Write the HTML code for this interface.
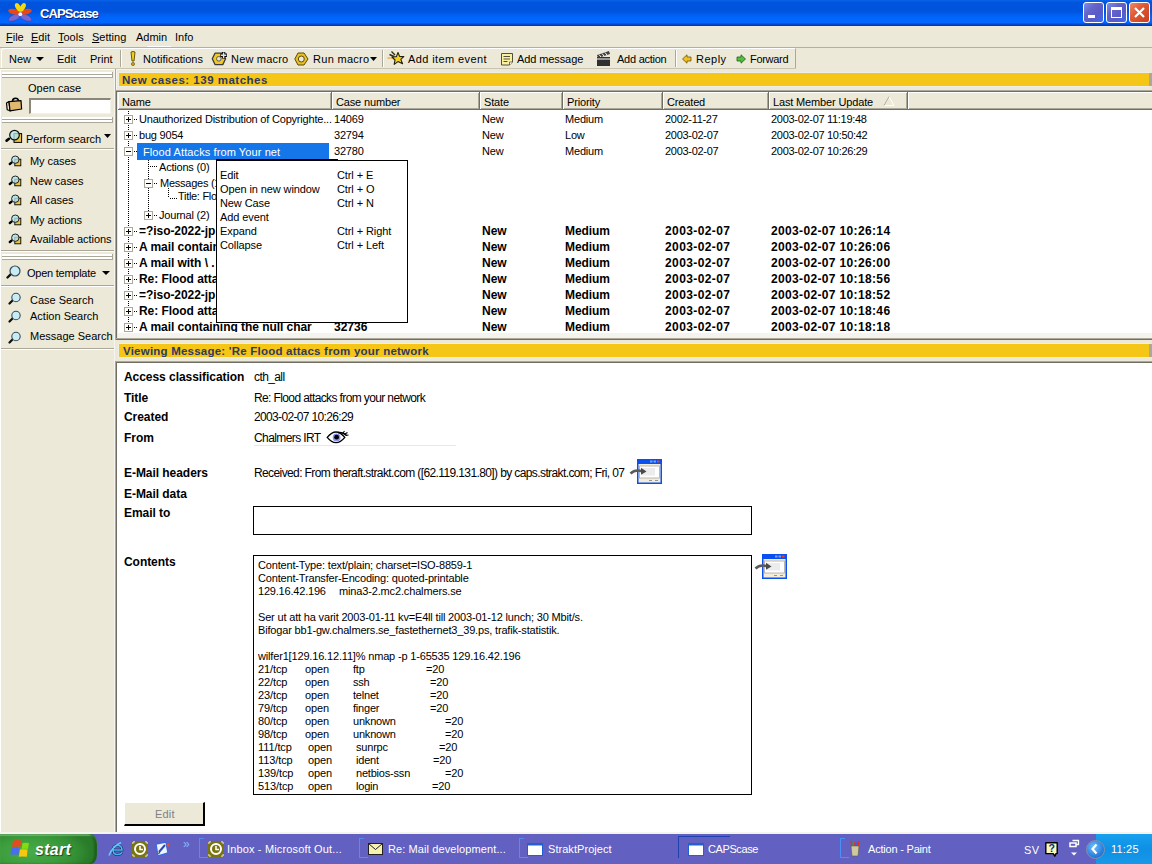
<!DOCTYPE html>
<html><head><meta charset="utf-8"><title>CAPScase</title>
<style>
html,body{margin:0;padding:0;}
body{width:1152px;height:864px;overflow:hidden;position:relative;background:#ece9d8;font-family:"Liberation Sans",sans-serif;font-size:11px;color:#000;}
.t{position:absolute;white-space:pre;}
.r{position:absolute;box-sizing:content-box;}
u{text-decoration:underline;text-underline-offset:1px;}
</style></head><body>
<div class="r" style="left:0px;top:0px;width:1152px;height:26px;background:linear-gradient(to bottom,#0a64ea 0px,#0054de 2.5px,#0053dc 11px,#0060f2 15px,#0066fe 18px,#0066ff 22.5px,#0046cc 24.5px,#0034b0 26px);"></div>
<svg class="r" style="left:0px;top:0px;" width="40" height="26" viewBox="0 0 40 26">
<ellipse cx="14.3" cy="17.6" rx="6.3" ry="2.9" fill="#7468d4" stroke="#4a3a90" stroke-width="0.5" transform="rotate(-24 14.3 17.6)"/>
<ellipse cx="25.9" cy="17.6" rx="6.3" ry="2.9" fill="#7468d4" stroke="#4a3a90" stroke-width="0.5" transform="rotate(24 25.9 17.6)"/>
<ellipse cx="13.7" cy="11.7" rx="5.6" ry="2.7" fill="#e84818" transform="rotate(14 13.7 11.7)"/>
<ellipse cx="26.3" cy="11.7" rx="5.6" ry="2.7" fill="#e84818" transform="rotate(-14 26.3 11.7)"/>
<ellipse cx="18.2" cy="7.4" rx="2.5" ry="4.8" fill="#f4d810" transform="rotate(-29 18.2 7.4)"/>
<ellipse cx="22.6" cy="7.4" rx="2.5" ry="4.8" fill="#f4d810" transform="rotate(29 22.6 7.4)"/>
<circle cx="20.3" cy="14.2" r="1.9" fill="#f4f4ff"/></svg>
<div class="t" style="left:40px;top:7px;font-size:13px;line-height:13px;font-weight:bold;color:#fff;letter-spacing:-0.9px;text-shadow:1px 1px 0 #0a1e80;">CAPScase</div>
<div class="r" style="left:1083px;top:2px;width:19px;height:19px;border:1px solid #fff;border-radius:3px;background:linear-gradient(135deg,#7d8ef0 0%,#6464c8 35%,#5a5ac8 65%,#3a6af0 100%);"></div>
<div class="r" style="left:1106px;top:2px;width:19px;height:19px;border:1px solid #fff;border-radius:3px;background:linear-gradient(135deg,#7d8ef0 0%,#6464c8 35%,#5a5ac8 65%,#3a6af0 100%);"></div>
<div class="r" style="left:1129px;top:2px;width:19px;height:19px;border:1px solid #fff;border-radius:3px;background:linear-gradient(135deg,#f08a68 0%,#e05a34 40%,#c8401c 100%);"></div>
<div class="r" style="left:1088px;top:15px;width:7px;height:3px;background:#fff;"></div>
<div class="r" style="left:1111px;top:7px;width:9px;height:7px;border:1px solid #fff;border-top-width:3px;"></div>
<svg class="r" style="left:1129px;top:2px;" width="21" height="21" viewBox="0 0 21 21"><path d="M6 6 L15 15 M15 6 L6 15" stroke="#fff" stroke-width="2.2"/></svg>
<div class="r" style="left:0px;top:26px;width:1152px;height:21px;background:#ece9d8;"></div>
<div class="t" style="left:6px;top:32px;font-size:11px;line-height:11px;"><u>F</u>ile</div>
<div class="t" style="left:31px;top:32px;font-size:11px;line-height:11px;"><u>E</u>dit</div>
<div class="t" style="left:58px;top:32px;font-size:11px;line-height:11px;"><u>T</u>ools</div>
<div class="t" style="left:92px;top:32px;font-size:11px;line-height:11px;"><u>S</u>etting</div>
<div class="t" style="left:136px;top:32px;font-size:11px;line-height:11px;">Admin</div>
<div class="t" style="left:175px;top:32px;font-size:11px;line-height:11px;">Info</div>
<div class="r" style="left:147px;top:46px;width:24px;height:1px;background:#fff;"></div>
<div class="r" style="left:0px;top:47px;width:1152px;height:1px;background:#b4b09e;"></div>
<div class="r" style="left:0px;top:48px;width:1152px;height:21px;background:#ece9d8;"></div>
<div class="r" style="left:1px;top:48px;width:793px;height:19px;border-top:1px solid #fff;border-left:1px solid #fff;border-bottom:1px solid #aca899;border-right:1px solid #aca899;border-radius:3px 0 0 0;"></div>
<div class="r" style="left:0px;top:68px;width:796px;height:1px;background:#c8c4b0;"></div>
<div class="t" style="left:9px;top:54px;font-size:11px;line-height:11px;">New</div>
<div class="t" style="left:57px;top:54px;font-size:11px;line-height:11px;">Edit</div>
<div class="t" style="left:90px;top:54px;font-size:11px;line-height:11px;">Print</div>
<svg class="r" style="left:36px;top:57px;" width="9" height="5" viewBox="0 0 9 5"><path d="M0 0 H8 L4 4 Z" fill="#000"/></svg>
<div class="r" style="left:120px;top:50px;width:1px;height:17px;background:#aca899;"></div>
<div class="r" style="left:121px;top:50px;width:1px;height:17px;background:#fff;"></div>
<div class="r" style="left:382px;top:50px;width:1px;height:17px;background:#aca899;"></div>
<div class="r" style="left:383px;top:50px;width:1px;height:17px;background:#fff;"></div>
<div class="r" style="left:675px;top:50px;width:1px;height:17px;background:#aca899;"></div>
<div class="r" style="left:676px;top:50px;width:1px;height:17px;background:#fff;"></div>
<svg class="r" style="left:129px;top:51px;" width="8" height="16" viewBox="0 0 8 16"><path d="M2 1 Q4 0 6 1 L5 10 H3 Z" fill="#f0d020" stroke="#5a4a00" stroke-width="0.9"/><circle cx="4" cy="13" r="1.6" fill="#d4a010" stroke="#5a4a00" stroke-width="0.6"/></svg>
<div class="t" style="left:143px;top:54px;font-size:11px;line-height:11px;">Notifications</div>
<svg class="r" style="left:211px;top:50px;" width="18" height="17" viewBox="0 0 18 17"><path d="M1.3 8.8 L4 3.2 L11 3.2 L14.6 8.8 L11.8 14.6 L4 14.6 Z" fill="#f0c828" stroke="#3a3a3a" stroke-width="1.3" stroke-linejoin="round"/><circle cx="7.8" cy="8.8" r="2.3" fill="#e4e4dc" stroke="#505048" stroke-width="0.9"/><path d="M12.6 2 V8.6 M9.3 5.3 H15.9" stroke="#000" stroke-width="3.4"/><path d="M12.6 2.6 V8 M9.9 5.3 H15.3" stroke="#dde4f8" stroke-width="1.5"/></svg>
<div class="t" style="left:231px;top:54px;font-size:11px;line-height:11px;letter-spacing:0.2px;">New macro</div>
<svg class="r" style="left:294px;top:51px;" width="16" height="15" viewBox="0 0 16 15"><path d="M4 2 L10 2 L14 8 L10 14 L4 14 L0.8 8 Z" fill="#e8c020" stroke="#5a4a10" stroke-width="1"/><circle cx="7.3" cy="8" r="3" fill="#ece9d8" stroke="#5a4a10" stroke-width="1"/></svg>
<div class="t" style="left:313px;top:54px;font-size:11px;line-height:11px;letter-spacing:0.3px;">Run macro</div>
<svg class="r" style="left:370px;top:57px;" width="8" height="5" viewBox="0 0 8 5"><path d="M0 0 H7 L3.5 4 Z" fill="#000"/></svg>
<svg class="r" style="left:387px;top:50px;" width="19" height="16" viewBox="0 0 19 16"><path d="M0.5 8.2 L6 8" stroke="#e8a040" stroke-width="1.2"/><path d="M2.5 4.5 L7 6.5 M4.5 1.5 L8 5" stroke="#303010" stroke-width="1.4"/><path d="M11 2.5 L12.6 6.4 L16.8 6.6 L13.8 9.4 L15.6 13.8 L11 11.6 L7.2 14.4 L8 10 L5 7 L9.4 6.6 Z" fill="#f4d020" stroke="#202010" stroke-width="1.1" stroke-linejoin="round"/></svg>
<div class="t" style="left:408px;top:54px;font-size:11px;line-height:11px;letter-spacing:0.4px;">Add item event</div>
<svg class="r" style="left:500px;top:52px;" width="14" height="14" viewBox="0 0 14 14"><path d="M1.5 1.5 H12.5 V10 L9.5 13 H1.5 Z" fill="#faf0a0" stroke="#50503a" stroke-width="1"/><path d="M9.5 13 V10 H12.5" fill="#fff" stroke="#50503a" stroke-width="0.8"/><path d="M3.5 4.5 H10 M3.5 7 H10 M3.5 9.5 H7.5" stroke="#50503a" stroke-width="1"/></svg>
<div class="t" style="left:517px;top:54px;font-size:11px;line-height:11px;letter-spacing:-0.1px;">Add message</div>
<svg class="r" style="left:596px;top:50px;" width="15" height="17" viewBox="0 0 15 17"><path d="M1 7 H14 V16 H1 Z" fill="#303030"/><path d="M1 5 L13 1 L14 4 L2 8 Z" fill="#404040"/><path d="M3 4.5 L5 7 M6 3.5 L8 6 M9 2.5 L11 5" stroke="#fff" stroke-width="1"/><path d="M1 9 H14" stroke="#fff" stroke-width="1"/></svg>
<div class="t" style="left:617px;top:54px;font-size:11px;line-height:11px;letter-spacing:-0.25px;">Add action</div>
<svg class="r" style="left:682px;top:54px;" width="10" height="10" viewBox="0 0 10 10"><path d="M0.5 5 L5 0.8 V3 H9 V7 H5 V9.2 Z" fill="#f0c020" stroke="#6a5010" stroke-width="0.8"/></svg>
<div class="t" style="left:696px;top:54px;font-size:11px;line-height:11px;letter-spacing:0.5px;">Reply</div>
<svg class="r" style="left:736px;top:54px;" width="10" height="10" viewBox="0 0 10 10"><path d="M9.5 5 L5 0.8 V3 H1 V7 H5 V9.2 Z" fill="#50c040" stroke="#206010" stroke-width="0.8"/></svg>
<div class="t" style="left:750px;top:54px;font-size:11px;line-height:11px;letter-spacing:-0.3px;">Forward</div>
<div class="r" style="left:0px;top:69px;width:114px;height:763px;background:#ece9d8;border-left:1px solid #fff;border-top:1px solid #fff;"></div>
<div class="r" style="left:114px;top:69px;width:1px;height:763px;background:#f6f5ee;"></div>
<div class="r" style="left:2px;top:72px;width:110px;height:2px;background:#fff;"></div>
<div class="r" style="left:2px;top:74px;width:111px;height:1px;background:#aca899;"></div>
<div class="r" style="left:2px;top:75px;width:110px;height:2px;background:#fff;"></div>
<div class="r" style="left:2px;top:77px;width:111px;height:1px;background:#aca899;"></div>
<div class="r" style="left:112px;top:72px;width:1px;height:6px;background:#aca899;"></div>
<div class="t" style="left:28px;top:83px;font-size:11px;line-height:11px;">Open case</div>
<svg class="r" style="left:5px;top:97px;" width="18" height="16" viewBox="0 0 18 16"><path d="M7.5 4.5 Q7.5 1.2 10.5 1.2 Q13.5 1.2 13.5 4.2" fill="none" stroke="#000" stroke-width="1.6"/><path d="M1.5 6 L4 4.6 L5 13.8 L2.2 12.8 Z" fill="#f4ead0" stroke="#000" stroke-width="1.2" stroke-linejoin="round"/><path d="M4 4.6 L16 3.6 L16.6 12 L5 13.8 Z" fill="#e0b870" stroke="#000" stroke-width="1.2" stroke-linejoin="round"/></svg>
<div class="r" style="left:29px;top:98px;width:79px;height:13px;background:#fff;border-top:2px solid #8a8778;border-left:2px solid #8a8778;border-bottom:1px solid #f4f2e8;border-right:1px solid #f4f2e8;"></div>
<div class="r" style="left:2px;top:117px;width:110px;height:2px;background:#fff;"></div>
<div class="r" style="left:2px;top:119px;width:111px;height:1px;background:#aca899;"></div>
<div class="r" style="left:2px;top:120px;width:110px;height:2px;background:#fff;"></div>
<div class="r" style="left:2px;top:122px;width:111px;height:1px;background:#aca899;"></div>
<div class="r" style="left:112px;top:117px;width:1px;height:6px;background:#aca899;"></div>
<svg class="r" style="left:2px;top:124px;" width="22" height="22" viewBox="0 0 22 22"><path d="M4.6 16.6 L7 14.8" stroke="#000" stroke-width="2.6" stroke-linecap="round"/><rect x="12" y="9.6" width="7.6" height="8.8" fill="#e8c440" stroke="#000" stroke-width="1"/><circle cx="12.5" cy="11.1" r="4.8" fill="#b0e8f4" fill-opacity="0.75" stroke="#111" stroke-width="1.2"/></svg>
<div class="t" style="left:26px;top:134px;font-size:11px;line-height:11px;">Perform search</div>
<svg class="r" style="left:104px;top:134px;" width="8" height="5" viewBox="0 0 8 5"><path d="M0 0 H7 L3.5 4 Z" fill="#000"/></svg>
<div class="r" style="left:1px;top:148px;width:113px;height:1px;background:#aca899;"></div>
<div class="r" style="left:1px;top:149px;width:113px;height:1px;background:#fff;"></div>
<svg class="r" style="left:8px;top:154px;" width="15" height="14" viewBox="0 0 15 14"><path d="M1.8 10 L3.6 8.6" stroke="#000" stroke-width="2.4" stroke-linecap="round"/><rect x="6.8" y="5.2" width="6" height="6.6" fill="#e8c440" stroke="#000" stroke-width="0.9"/><circle cx="7.3" cy="5.7" r="3.7" fill="#b0e8f4" fill-opacity="0.75" stroke="#222" stroke-width="1"/></svg>
<div class="t" style="left:30px;top:156px;font-size:11px;line-height:11px;letter-spacing:-0.05px;">My cases</div>
<svg class="r" style="left:8px;top:174px;" width="15" height="14" viewBox="0 0 15 14"><path d="M1.8 10 L3.6 8.6" stroke="#000" stroke-width="2.4" stroke-linecap="round"/><rect x="6.8" y="5.2" width="6" height="6.6" fill="#e8c440" stroke="#000" stroke-width="0.9"/><circle cx="7.3" cy="5.7" r="3.7" fill="#b0e8f4" fill-opacity="0.75" stroke="#222" stroke-width="1"/></svg>
<div class="t" style="left:30px;top:176px;font-size:11px;line-height:11px;letter-spacing:-0.05px;">New cases</div>
<svg class="r" style="left:8px;top:193px;" width="15" height="14" viewBox="0 0 15 14"><path d="M1.8 10 L3.6 8.6" stroke="#000" stroke-width="2.4" stroke-linecap="round"/><rect x="6.8" y="5.2" width="6" height="6.6" fill="#e8c440" stroke="#000" stroke-width="0.9"/><circle cx="7.3" cy="5.7" r="3.7" fill="#b0e8f4" fill-opacity="0.75" stroke="#222" stroke-width="1"/></svg>
<div class="t" style="left:30px;top:195px;font-size:11px;line-height:11px;letter-spacing:-0.05px;">All cases</div>
<svg class="r" style="left:8px;top:213px;" width="15" height="14" viewBox="0 0 15 14"><path d="M1.8 10 L3.6 8.6" stroke="#000" stroke-width="2.4" stroke-linecap="round"/><rect x="6.8" y="5.2" width="6" height="6.6" fill="#e8c440" stroke="#000" stroke-width="0.9"/><circle cx="7.3" cy="5.7" r="3.7" fill="#b0e8f4" fill-opacity="0.75" stroke="#222" stroke-width="1"/></svg>
<div class="t" style="left:30px;top:215px;font-size:11px;line-height:11px;letter-spacing:-0.05px;">My actions</div>
<svg class="r" style="left:8px;top:232px;" width="15" height="14" viewBox="0 0 15 14"><path d="M1.8 10 L3.6 8.6" stroke="#000" stroke-width="2.4" stroke-linecap="round"/><rect x="6.8" y="5.2" width="6" height="6.6" fill="#e8c440" stroke="#000" stroke-width="0.9"/><circle cx="7.3" cy="5.7" r="3.7" fill="#b0e8f4" fill-opacity="0.75" stroke="#222" stroke-width="1"/></svg>
<div class="t" style="left:30px;top:234px;font-size:11px;line-height:11px;letter-spacing:-0.05px;">Available actions</div>
<div class="r" style="left:1px;top:250px;width:113px;height:1px;background:#aca899;"></div>
<div class="r" style="left:1px;top:251px;width:113px;height:1px;background:#fff;"></div>
<div class="r" style="left:2px;top:254px;width:110px;height:2px;background:#fff;"></div>
<div class="r" style="left:2px;top:256px;width:111px;height:1px;background:#aca899;"></div>
<div class="r" style="left:2px;top:257px;width:110px;height:2px;background:#fff;"></div>
<div class="r" style="left:2px;top:259px;width:111px;height:1px;background:#aca899;"></div>
<div class="r" style="left:112px;top:254px;width:1px;height:6px;background:#aca899;"></div>
<svg class="r" style="left:6px;top:265px;" width="16" height="14" viewBox="0 0 16 14"><path d="M1.5 12.5 L5 9" stroke="#101010" stroke-width="2.4" stroke-linecap="round"/><circle cx="9" cy="6" r="5" fill="#c8ecf4" stroke="#3a4a5a" stroke-width="1.2"/></svg>
<div class="t" style="left:27px;top:268px;font-size:11px;line-height:11px;letter-spacing:-0.25px;">Open template</div>
<svg class="r" style="left:102px;top:271px;" width="9" height="5" viewBox="0 0 9 5"><path d="M0 0 H8 L4 4 Z" fill="#000"/></svg>
<div class="r" style="left:1px;top:285px;width:113px;height:1px;background:#aca899;"></div>
<div class="r" style="left:1px;top:286px;width:113px;height:1px;background:#fff;"></div>
<svg class="r" style="left:8px;top:292px;" width="14" height="13" viewBox="0 0 14 13"><path d="M1.5 11.5 L4.5 8.5" stroke="#101010" stroke-width="2.2" stroke-linecap="round"/><circle cx="8" cy="5.5" r="4.2" fill="#c8ecf4" stroke="#3a4a5a" stroke-width="1.1"/></svg>
<div class="t" style="left:30px;top:295px;font-size:11px;line-height:11px;">Case Search</div>
<svg class="r" style="left:8px;top:310px;" width="14" height="13" viewBox="0 0 14 13"><path d="M1.5 11.5 L4.5 8.5" stroke="#101010" stroke-width="2.2" stroke-linecap="round"/><circle cx="8" cy="5.5" r="4.2" fill="#c8ecf4" stroke="#3a4a5a" stroke-width="1.1"/></svg>
<div class="t" style="left:30px;top:311px;font-size:11px;line-height:11px;">Action Search</div>
<svg class="r" style="left:8px;top:331px;" width="14" height="13" viewBox="0 0 14 13"><path d="M1.5 11.5 L4.5 8.5" stroke="#101010" stroke-width="2.2" stroke-linecap="round"/><circle cx="8" cy="5.5" r="4.2" fill="#c8ecf4" stroke="#3a4a5a" stroke-width="1.1"/></svg>
<div class="t" style="left:30px;top:331px;font-size:11px;line-height:11px;">Message Search</div>
<div class="r" style="left:1px;top:348px;width:113px;height:1px;background:#aca899;"></div>
<div class="r" style="left:1px;top:349px;width:113px;height:1px;background:#fff;"></div>
<div class="r" style="left:115px;top:69px;width:1px;height:271px;background:#aca899;"></div>
<div class="r" style="left:116px;top:69px;width:1036px;height:21px;background:#ece9d8;"></div>
<div class="r" style="left:116px;top:69px;width:1px;height:21px;background:#f6f5ee;"></div>
<div class="r" style="left:116px;top:69px;width:60px;height:1px;background:#f4f3ec;"></div>
<div class="r" style="left:118px;top:72px;width:1032px;height:15px;background:#efeee6;"></div>
<div class="r" style="left:119px;top:73px;width:1030px;height:13px;background:#f6c616;"></div>
<div class="r" style="left:1149px;top:73px;width:3px;height:13px;background:#aca899;"></div>
<div class="t" style="left:122px;top:75px;font-size:11.5px;line-height:11.5px;font-weight:bold;color:#2e3a62;letter-spacing:0.5px;">New cases: 139 matches</div>
<div class="r" style="left:116px;top:90px;width:1036px;height:1px;background:#aca899;"></div>
<div class="r" style="left:116px;top:91px;width:1036px;height:1px;background:#716f64;"></div>
<div class="r" style="left:116px;top:91px;width:1px;height:248px;background:#716f64;"></div>
<div class="r" style="left:118px;top:92px;width:1034px;height:241px;background:#fff;"></div>
<div class="r" style="left:118px;top:92px;width:1034px;height:18px;background:#ece9d8;"></div>
<div class="r" style="left:118px;top:92px;width:1034px;height:1px;background:#fff;"></div>
<div class="r" style="left:118px;top:108px;width:1034px;height:1px;background:#aca899;"></div>
<div class="r" style="left:118px;top:109px;width:1034px;height:1px;background:#716f64;"></div>
<div class="r" style="left:118px;top:92px;width:1px;height:17px;background:#fff;"></div>
<div class="r" style="left:330px;top:93px;width:1px;height:16px;background:#aca899;"></div>
<div class="r" style="left:331px;top:92px;width:1px;height:18px;background:#716f64;"></div>
<div class="r" style="left:332px;top:92px;width:1px;height:17px;background:#fff;"></div>
<div class="r" style="left:478px;top:93px;width:1px;height:16px;background:#aca899;"></div>
<div class="r" style="left:479px;top:92px;width:1px;height:18px;background:#716f64;"></div>
<div class="r" style="left:480px;top:92px;width:1px;height:17px;background:#fff;"></div>
<div class="r" style="left:561px;top:93px;width:1px;height:16px;background:#aca899;"></div>
<div class="r" style="left:562px;top:92px;width:1px;height:18px;background:#716f64;"></div>
<div class="r" style="left:563px;top:92px;width:1px;height:17px;background:#fff;"></div>
<div class="r" style="left:661px;top:93px;width:1px;height:16px;background:#aca899;"></div>
<div class="r" style="left:662px;top:92px;width:1px;height:18px;background:#716f64;"></div>
<div class="r" style="left:663px;top:92px;width:1px;height:17px;background:#fff;"></div>
<div class="r" style="left:767px;top:93px;width:1px;height:16px;background:#aca899;"></div>
<div class="r" style="left:768px;top:92px;width:1px;height:18px;background:#716f64;"></div>
<div class="r" style="left:769px;top:92px;width:1px;height:17px;background:#fff;"></div>
<div class="r" style="left:906px;top:93px;width:1px;height:16px;background:#aca899;"></div>
<div class="r" style="left:907px;top:92px;width:1px;height:18px;background:#716f64;"></div>
<div class="r" style="left:908px;top:92px;width:1px;height:17px;background:#fff;"></div>
<div class="t" style="left:122px;top:97px;font-size:11px;line-height:11px;letter-spacing:-0.15px;">Name</div>
<div class="t" style="left:336px;top:97px;font-size:11px;line-height:11px;letter-spacing:-0.15px;">Case number</div>
<div class="t" style="left:484px;top:97px;font-size:11px;line-height:11px;letter-spacing:-0.15px;">State</div>
<div class="t" style="left:567px;top:97px;font-size:11px;line-height:11px;letter-spacing:-0.15px;">Priority</div>
<div class="t" style="left:667px;top:97px;font-size:11px;line-height:11px;letter-spacing:-0.15px;">Created</div>
<div class="t" style="left:773px;top:97px;font-size:11px;line-height:11px;letter-spacing:-0.15px;">Last Member Update</div>
<svg class="r" style="left:883px;top:96px;" width="12" height="10" viewBox="0 0 12 10"><path d="M6 0.5 L11 9.5 H1 Z" fill="none" stroke="#fff" stroke-width="1"/><path d="M6 0.5 L1 9.5" stroke="#aca899" stroke-width="1"/></svg>
<div class="r" style="left:128px;top:111px;width:1px;height:1px;background:#000;"></div>
<div class="r" style="left:128px;top:113px;width:1px;height:1px;background:#000;"></div>
<div class="r" style="left:128px;top:115px;width:1px;height:1px;background:#000;"></div>
<div class="r" style="left:128px;top:117px;width:1px;height:1px;background:#000;"></div>
<div class="r" style="left:128px;top:119px;width:1px;height:1px;background:#000;"></div>
<div class="r" style="left:128px;top:121px;width:1px;height:1px;background:#000;"></div>
<div class="r" style="left:128px;top:123px;width:1px;height:1px;background:#000;"></div>
<div class="r" style="left:128px;top:125px;width:1px;height:1px;background:#000;"></div>
<div class="r" style="left:128px;top:127px;width:1px;height:1px;background:#000;"></div>
<div class="r" style="left:128px;top:129px;width:1px;height:1px;background:#000;"></div>
<div class="r" style="left:128px;top:131px;width:1px;height:1px;background:#000;"></div>
<div class="r" style="left:128px;top:133px;width:1px;height:1px;background:#000;"></div>
<div class="r" style="left:128px;top:135px;width:1px;height:1px;background:#000;"></div>
<div class="r" style="left:128px;top:137px;width:1px;height:1px;background:#000;"></div>
<div class="r" style="left:128px;top:139px;width:1px;height:1px;background:#000;"></div>
<div class="r" style="left:128px;top:141px;width:1px;height:1px;background:#000;"></div>
<div class="r" style="left:128px;top:143px;width:1px;height:1px;background:#000;"></div>
<div class="r" style="left:128px;top:145px;width:1px;height:1px;background:#000;"></div>
<div class="r" style="left:128px;top:147px;width:1px;height:1px;background:#000;"></div>
<div class="r" style="left:128px;top:149px;width:1px;height:1px;background:#000;"></div>
<div class="r" style="left:128px;top:151px;width:1px;height:1px;background:#000;"></div>
<div class="r" style="left:128px;top:153px;width:1px;height:1px;background:#000;"></div>
<div class="r" style="left:128px;top:155px;width:1px;height:1px;background:#000;"></div>
<div class="r" style="left:128px;top:157px;width:1px;height:1px;background:#000;"></div>
<div class="r" style="left:128px;top:159px;width:1px;height:1px;background:#000;"></div>
<div class="r" style="left:128px;top:161px;width:1px;height:1px;background:#000;"></div>
<div class="r" style="left:128px;top:163px;width:1px;height:1px;background:#000;"></div>
<div class="r" style="left:128px;top:165px;width:1px;height:1px;background:#000;"></div>
<div class="r" style="left:128px;top:167px;width:1px;height:1px;background:#000;"></div>
<div class="r" style="left:128px;top:169px;width:1px;height:1px;background:#000;"></div>
<div class="r" style="left:128px;top:171px;width:1px;height:1px;background:#000;"></div>
<div class="r" style="left:128px;top:173px;width:1px;height:1px;background:#000;"></div>
<div class="r" style="left:128px;top:175px;width:1px;height:1px;background:#000;"></div>
<div class="r" style="left:128px;top:177px;width:1px;height:1px;background:#000;"></div>
<div class="r" style="left:128px;top:179px;width:1px;height:1px;background:#000;"></div>
<div class="r" style="left:128px;top:181px;width:1px;height:1px;background:#000;"></div>
<div class="r" style="left:128px;top:183px;width:1px;height:1px;background:#000;"></div>
<div class="r" style="left:128px;top:185px;width:1px;height:1px;background:#000;"></div>
<div class="r" style="left:128px;top:187px;width:1px;height:1px;background:#000;"></div>
<div class="r" style="left:128px;top:189px;width:1px;height:1px;background:#000;"></div>
<div class="r" style="left:128px;top:191px;width:1px;height:1px;background:#000;"></div>
<div class="r" style="left:128px;top:193px;width:1px;height:1px;background:#000;"></div>
<div class="r" style="left:128px;top:195px;width:1px;height:1px;background:#000;"></div>
<div class="r" style="left:128px;top:197px;width:1px;height:1px;background:#000;"></div>
<div class="r" style="left:128px;top:199px;width:1px;height:1px;background:#000;"></div>
<div class="r" style="left:128px;top:201px;width:1px;height:1px;background:#000;"></div>
<div class="r" style="left:128px;top:203px;width:1px;height:1px;background:#000;"></div>
<div class="r" style="left:128px;top:205px;width:1px;height:1px;background:#000;"></div>
<div class="r" style="left:128px;top:207px;width:1px;height:1px;background:#000;"></div>
<div class="r" style="left:128px;top:209px;width:1px;height:1px;background:#000;"></div>
<div class="r" style="left:128px;top:211px;width:1px;height:1px;background:#000;"></div>
<div class="r" style="left:128px;top:213px;width:1px;height:1px;background:#000;"></div>
<div class="r" style="left:128px;top:215px;width:1px;height:1px;background:#000;"></div>
<div class="r" style="left:128px;top:217px;width:1px;height:1px;background:#000;"></div>
<div class="r" style="left:128px;top:219px;width:1px;height:1px;background:#000;"></div>
<div class="r" style="left:128px;top:221px;width:1px;height:1px;background:#000;"></div>
<div class="r" style="left:128px;top:223px;width:1px;height:1px;background:#000;"></div>
<div class="r" style="left:128px;top:225px;width:1px;height:1px;background:#000;"></div>
<div class="r" style="left:128px;top:227px;width:1px;height:1px;background:#000;"></div>
<div class="r" style="left:128px;top:229px;width:1px;height:1px;background:#000;"></div>
<div class="r" style="left:128px;top:231px;width:1px;height:1px;background:#000;"></div>
<div class="r" style="left:128px;top:233px;width:1px;height:1px;background:#000;"></div>
<div class="r" style="left:128px;top:235px;width:1px;height:1px;background:#000;"></div>
<div class="r" style="left:128px;top:237px;width:1px;height:1px;background:#000;"></div>
<div class="r" style="left:128px;top:239px;width:1px;height:1px;background:#000;"></div>
<div class="r" style="left:128px;top:241px;width:1px;height:1px;background:#000;"></div>
<div class="r" style="left:128px;top:243px;width:1px;height:1px;background:#000;"></div>
<div class="r" style="left:128px;top:245px;width:1px;height:1px;background:#000;"></div>
<div class="r" style="left:128px;top:247px;width:1px;height:1px;background:#000;"></div>
<div class="r" style="left:128px;top:249px;width:1px;height:1px;background:#000;"></div>
<div class="r" style="left:128px;top:251px;width:1px;height:1px;background:#000;"></div>
<div class="r" style="left:128px;top:253px;width:1px;height:1px;background:#000;"></div>
<div class="r" style="left:128px;top:255px;width:1px;height:1px;background:#000;"></div>
<div class="r" style="left:128px;top:257px;width:1px;height:1px;background:#000;"></div>
<div class="r" style="left:128px;top:259px;width:1px;height:1px;background:#000;"></div>
<div class="r" style="left:128px;top:261px;width:1px;height:1px;background:#000;"></div>
<div class="r" style="left:128px;top:263px;width:1px;height:1px;background:#000;"></div>
<div class="r" style="left:128px;top:265px;width:1px;height:1px;background:#000;"></div>
<div class="r" style="left:128px;top:267px;width:1px;height:1px;background:#000;"></div>
<div class="r" style="left:128px;top:269px;width:1px;height:1px;background:#000;"></div>
<div class="r" style="left:128px;top:271px;width:1px;height:1px;background:#000;"></div>
<div class="r" style="left:128px;top:273px;width:1px;height:1px;background:#000;"></div>
<div class="r" style="left:128px;top:275px;width:1px;height:1px;background:#000;"></div>
<div class="r" style="left:128px;top:277px;width:1px;height:1px;background:#000;"></div>
<div class="r" style="left:128px;top:279px;width:1px;height:1px;background:#000;"></div>
<div class="r" style="left:128px;top:281px;width:1px;height:1px;background:#000;"></div>
<div class="r" style="left:128px;top:283px;width:1px;height:1px;background:#000;"></div>
<div class="r" style="left:128px;top:285px;width:1px;height:1px;background:#000;"></div>
<div class="r" style="left:128px;top:287px;width:1px;height:1px;background:#000;"></div>
<div class="r" style="left:128px;top:289px;width:1px;height:1px;background:#000;"></div>
<div class="r" style="left:128px;top:291px;width:1px;height:1px;background:#000;"></div>
<div class="r" style="left:128px;top:293px;width:1px;height:1px;background:#000;"></div>
<div class="r" style="left:128px;top:295px;width:1px;height:1px;background:#000;"></div>
<div class="r" style="left:128px;top:297px;width:1px;height:1px;background:#000;"></div>
<div class="r" style="left:128px;top:299px;width:1px;height:1px;background:#000;"></div>
<div class="r" style="left:128px;top:301px;width:1px;height:1px;background:#000;"></div>
<div class="r" style="left:128px;top:303px;width:1px;height:1px;background:#000;"></div>
<div class="r" style="left:128px;top:305px;width:1px;height:1px;background:#000;"></div>
<div class="r" style="left:128px;top:307px;width:1px;height:1px;background:#000;"></div>
<div class="r" style="left:128px;top:309px;width:1px;height:1px;background:#000;"></div>
<div class="r" style="left:128px;top:311px;width:1px;height:1px;background:#000;"></div>
<div class="r" style="left:128px;top:313px;width:1px;height:1px;background:#000;"></div>
<div class="r" style="left:128px;top:315px;width:1px;height:1px;background:#000;"></div>
<div class="r" style="left:128px;top:317px;width:1px;height:1px;background:#000;"></div>
<div class="r" style="left:128px;top:319px;width:1px;height:1px;background:#000;"></div>
<div class="r" style="left:128px;top:321px;width:1px;height:1px;background:#000;"></div>
<div class="r" style="left:128px;top:323px;width:1px;height:1px;background:#000;"></div>
<div class="r" style="left:128px;top:325px;width:1px;height:1px;background:#000;"></div>
<div class="r" style="left:128px;top:327px;width:1px;height:1px;background:#000;"></div>
<div class="r" style="left:128px;top:329px;width:1px;height:1px;background:#000;"></div>
<div class="r" style="left:128px;top:331px;width:1px;height:1px;background:#000;"></div>
<div class="r" style="left:137px;top:143px;width:192px;height:17px;background:#1476e8;"></div>
<div class="r" style="left:124px;top:115px;width:7px;height:7px;border:1px solid #aca899;background:#fff;"></div>
<div class="r" style="left:126px;top:119px;width:5px;height:1px;background:#000;"></div>
<div class="r" style="left:128px;top:117px;width:1px;height:5px;background:#000;"></div>
<div class="r" style="left:134px;top:119px;width:1px;height:1px;background:#000;"></div>
<div class="r" style="left:136px;top:119px;width:1px;height:1px;background:#000;"></div>
<div class="t" style="left:139px;top:114px;font-size:11px;line-height:11px;letter-spacing:-0.2px;">Unauthorized Distribution of Copyrighte...</div>
<div class="t" style="left:334px;top:114px;font-size:11px;line-height:11px;letter-spacing:-0.2px;">14069</div>
<div class="t" style="left:482px;top:114px;font-size:11px;line-height:11px;letter-spacing:-0.2px;">New</div>
<div class="t" style="left:565px;top:114px;font-size:11px;line-height:11px;letter-spacing:-0.2px;">Medium</div>
<div class="t" style="left:665px;top:114px;font-size:11px;line-height:11px;letter-spacing:-0.3px;">2002-11-27</div>
<div class="t" style="left:771px;top:114px;font-size:11px;line-height:11px;letter-spacing:-0.3px;">2003-02-07 11:19:48</div>
<div class="r" style="left:124px;top:131px;width:7px;height:7px;border:1px solid #aca899;background:#fff;"></div>
<div class="r" style="left:126px;top:135px;width:5px;height:1px;background:#000;"></div>
<div class="r" style="left:128px;top:133px;width:1px;height:5px;background:#000;"></div>
<div class="r" style="left:134px;top:135px;width:1px;height:1px;background:#000;"></div>
<div class="r" style="left:136px;top:135px;width:1px;height:1px;background:#000;"></div>
<div class="t" style="left:139px;top:130px;font-size:11px;line-height:11px;letter-spacing:-0.2px;">bug 9054</div>
<div class="t" style="left:334px;top:130px;font-size:11px;line-height:11px;letter-spacing:-0.2px;">32794</div>
<div class="t" style="left:482px;top:130px;font-size:11px;line-height:11px;letter-spacing:-0.2px;">New</div>
<div class="t" style="left:565px;top:130px;font-size:11px;line-height:11px;letter-spacing:-0.2px;">Low</div>
<div class="t" style="left:665px;top:130px;font-size:11px;line-height:11px;letter-spacing:-0.3px;">2003-02-07</div>
<div class="t" style="left:771px;top:130px;font-size:11px;line-height:11px;letter-spacing:-0.3px;">2003-02-07 10:50:42</div>
<div class="r" style="left:124px;top:147px;width:7px;height:7px;border:1px solid #aca899;background:#fff;"></div>
<div class="r" style="left:126px;top:151px;width:5px;height:1px;background:#000;"></div>
<div class="r" style="left:134px;top:151px;width:1px;height:1px;background:#000;"></div>
<div class="r" style="left:136px;top:151px;width:1px;height:1px;background:#000;"></div>
<div class="t" style="left:143px;top:147px;font-size:11px;line-height:11px;color:#fff;letter-spacing:0.1px;">Flood Attacks from Your net</div>
<div class="t" style="left:334px;top:146px;font-size:11px;line-height:11px;letter-spacing:-0.2px;">32780</div>
<div class="t" style="left:482px;top:146px;font-size:11px;line-height:11px;letter-spacing:-0.2px;">New</div>
<div class="t" style="left:565px;top:146px;font-size:11px;line-height:11px;letter-spacing:-0.2px;">Medium</div>
<div class="t" style="left:665px;top:146px;font-size:11px;line-height:11px;letter-spacing:-0.3px;">2003-02-07</div>
<div class="t" style="left:771px;top:146px;font-size:11px;line-height:11px;letter-spacing:-0.3px;">2003-02-07 10:26:29</div>
<div class="r" style="left:148px;top:160px;width:1px;height:1px;background:#000;"></div>
<div class="r" style="left:148px;top:162px;width:1px;height:1px;background:#000;"></div>
<div class="r" style="left:148px;top:164px;width:1px;height:1px;background:#000;"></div>
<div class="r" style="left:148px;top:166px;width:1px;height:1px;background:#000;"></div>
<div class="r" style="left:148px;top:168px;width:1px;height:1px;background:#000;"></div>
<div class="r" style="left:148px;top:170px;width:1px;height:1px;background:#000;"></div>
<div class="r" style="left:148px;top:172px;width:1px;height:1px;background:#000;"></div>
<div class="r" style="left:148px;top:174px;width:1px;height:1px;background:#000;"></div>
<div class="r" style="left:148px;top:176px;width:1px;height:1px;background:#000;"></div>
<div class="r" style="left:148px;top:178px;width:1px;height:1px;background:#000;"></div>
<div class="r" style="left:148px;top:180px;width:1px;height:1px;background:#000;"></div>
<div class="r" style="left:148px;top:182px;width:1px;height:1px;background:#000;"></div>
<div class="r" style="left:148px;top:184px;width:1px;height:1px;background:#000;"></div>
<div class="r" style="left:148px;top:186px;width:1px;height:1px;background:#000;"></div>
<div class="r" style="left:148px;top:188px;width:1px;height:1px;background:#000;"></div>
<div class="r" style="left:148px;top:190px;width:1px;height:1px;background:#000;"></div>
<div class="r" style="left:148px;top:192px;width:1px;height:1px;background:#000;"></div>
<div class="r" style="left:148px;top:194px;width:1px;height:1px;background:#000;"></div>
<div class="r" style="left:148px;top:196px;width:1px;height:1px;background:#000;"></div>
<div class="r" style="left:148px;top:198px;width:1px;height:1px;background:#000;"></div>
<div class="r" style="left:148px;top:200px;width:1px;height:1px;background:#000;"></div>
<div class="r" style="left:148px;top:202px;width:1px;height:1px;background:#000;"></div>
<div class="r" style="left:148px;top:204px;width:1px;height:1px;background:#000;"></div>
<div class="r" style="left:148px;top:206px;width:1px;height:1px;background:#000;"></div>
<div class="r" style="left:148px;top:208px;width:1px;height:1px;background:#000;"></div>
<div class="r" style="left:148px;top:210px;width:1px;height:1px;background:#000;"></div>
<div class="r" style="left:148px;top:212px;width:1px;height:1px;background:#000;"></div>
<div class="r" style="left:148px;top:214px;width:1px;height:1px;background:#000;"></div>
<div class="r" style="left:150px;top:166px;width:1px;height:1px;background:#000;"></div>
<div class="r" style="left:152px;top:166px;width:1px;height:1px;background:#000;"></div>
<div class="r" style="left:154px;top:166px;width:1px;height:1px;background:#000;"></div>
<div class="r" style="left:156px;top:166px;width:1px;height:1px;background:#000;"></div>
<div class="t" style="left:159px;top:162px;font-size:11px;line-height:11px;letter-spacing:-0.2px;">Actions (0)</div>
<div class="r" style="left:144px;top:179px;width:7px;height:7px;border:1px solid #aca899;background:#fff;"></div>
<div class="r" style="left:146px;top:183px;width:5px;height:1px;background:#000;"></div>
<div class="r" style="left:154px;top:183px;width:1px;height:1px;background:#000;"></div>
<div class="r" style="left:156px;top:183px;width:1px;height:1px;background:#000;"></div>
<div class="t" style="left:160px;top:178px;font-size:11px;line-height:11px;letter-spacing:-0.25px;">Messages (1)</div>
<div class="r" style="left:168px;top:188px;width:1px;height:1px;background:#000;"></div>
<div class="r" style="left:168px;top:190px;width:1px;height:1px;background:#000;"></div>
<div class="r" style="left:168px;top:192px;width:1px;height:1px;background:#000;"></div>
<div class="r" style="left:168px;top:194px;width:1px;height:1px;background:#000;"></div>
<div class="r" style="left:168px;top:196px;width:1px;height:1px;background:#000;"></div>
<div class="r" style="left:170px;top:198px;width:1px;height:1px;background:#000;"></div>
<div class="r" style="left:172px;top:198px;width:1px;height:1px;background:#000;"></div>
<div class="r" style="left:174px;top:198px;width:1px;height:1px;background:#000;"></div>
<div class="r" style="left:176px;top:198px;width:1px;height:1px;background:#000;"></div>
<div class="t" style="left:178px;top:191px;font-size:11px;line-height:11px;letter-spacing:-0.3px;">Title: Flood Attacks</div>
<div class="r" style="left:144px;top:211px;width:7px;height:7px;border:1px solid #aca899;background:#fff;"></div>
<div class="r" style="left:146px;top:215px;width:5px;height:1px;background:#000;"></div>
<div class="r" style="left:148px;top:213px;width:1px;height:5px;background:#000;"></div>
<div class="r" style="left:154px;top:215px;width:1px;height:1px;background:#000;"></div>
<div class="r" style="left:156px;top:215px;width:1px;height:1px;background:#000;"></div>
<div class="t" style="left:159px;top:210px;font-size:11px;line-height:11px;letter-spacing:-0.2px;">Journal (2)</div>
<div class="r" style="left:124px;top:227px;width:7px;height:7px;border:1px solid #aca899;background:#fff;"></div>
<div class="r" style="left:126px;top:231px;width:5px;height:1px;background:#000;"></div>
<div class="r" style="left:128px;top:229px;width:1px;height:5px;background:#000;"></div>
<div class="r" style="left:134px;top:231px;width:1px;height:1px;background:#000;"></div>
<div class="r" style="left:136px;top:231px;width:1px;height:1px;background:#000;"></div>
<div class="t" style="left:139px;top:225px;font-size:12px;line-height:12px;font-weight:bold;letter-spacing:-0.05px;">=?iso-2022-jp</div>
<div class="t" style="left:482px;top:225px;font-size:12px;line-height:12px;font-weight:bold;">New</div>
<div class="t" style="left:565px;top:225px;font-size:12px;line-height:12px;font-weight:bold;letter-spacing:-0.1px;">Medium</div>
<div class="t" style="left:665px;top:225px;font-size:12px;line-height:12px;font-weight:bold;letter-spacing:0.4px;">2003-02-07</div>
<div class="t" style="left:771px;top:225px;font-size:12px;line-height:12px;font-weight:bold;letter-spacing:0.35px;">2003-02-07 10:26:14</div>
<div class="r" style="left:124px;top:243px;width:7px;height:7px;border:1px solid #aca899;background:#fff;"></div>
<div class="r" style="left:126px;top:247px;width:5px;height:1px;background:#000;"></div>
<div class="r" style="left:128px;top:245px;width:1px;height:5px;background:#000;"></div>
<div class="r" style="left:134px;top:247px;width:1px;height:1px;background:#000;"></div>
<div class="r" style="left:136px;top:247px;width:1px;height:1px;background:#000;"></div>
<div class="t" style="left:139px;top:241px;font-size:12px;line-height:12px;font-weight:bold;letter-spacing:-0.05px;">A mail contain</div>
<div class="t" style="left:482px;top:241px;font-size:12px;line-height:12px;font-weight:bold;">New</div>
<div class="t" style="left:565px;top:241px;font-size:12px;line-height:12px;font-weight:bold;letter-spacing:-0.1px;">Medium</div>
<div class="t" style="left:665px;top:241px;font-size:12px;line-height:12px;font-weight:bold;letter-spacing:0.4px;">2003-02-07</div>
<div class="t" style="left:771px;top:241px;font-size:12px;line-height:12px;font-weight:bold;letter-spacing:0.35px;">2003-02-07 10:26:06</div>
<div class="r" style="left:124px;top:259px;width:7px;height:7px;border:1px solid #aca899;background:#fff;"></div>
<div class="r" style="left:126px;top:263px;width:5px;height:1px;background:#000;"></div>
<div class="r" style="left:128px;top:261px;width:1px;height:5px;background:#000;"></div>
<div class="r" style="left:134px;top:263px;width:1px;height:1px;background:#000;"></div>
<div class="r" style="left:136px;top:263px;width:1px;height:1px;background:#000;"></div>
<div class="t" style="left:139px;top:257px;font-size:12px;line-height:12px;font-weight:bold;letter-spacing:-0.05px;">A mail with \ .</div>
<div class="t" style="left:482px;top:257px;font-size:12px;line-height:12px;font-weight:bold;">New</div>
<div class="t" style="left:565px;top:257px;font-size:12px;line-height:12px;font-weight:bold;letter-spacing:-0.1px;">Medium</div>
<div class="t" style="left:665px;top:257px;font-size:12px;line-height:12px;font-weight:bold;letter-spacing:0.4px;">2003-02-07</div>
<div class="t" style="left:771px;top:257px;font-size:12px;line-height:12px;font-weight:bold;letter-spacing:0.35px;">2003-02-07 10:26:00</div>
<div class="r" style="left:124px;top:275px;width:7px;height:7px;border:1px solid #aca899;background:#fff;"></div>
<div class="r" style="left:126px;top:279px;width:5px;height:1px;background:#000;"></div>
<div class="r" style="left:128px;top:277px;width:1px;height:5px;background:#000;"></div>
<div class="r" style="left:134px;top:279px;width:1px;height:1px;background:#000;"></div>
<div class="r" style="left:136px;top:279px;width:1px;height:1px;background:#000;"></div>
<div class="t" style="left:139px;top:273px;font-size:12px;line-height:12px;font-weight:bold;letter-spacing:-0.05px;">Re: Flood atta</div>
<div class="t" style="left:482px;top:273px;font-size:12px;line-height:12px;font-weight:bold;">New</div>
<div class="t" style="left:565px;top:273px;font-size:12px;line-height:12px;font-weight:bold;letter-spacing:-0.1px;">Medium</div>
<div class="t" style="left:665px;top:273px;font-size:12px;line-height:12px;font-weight:bold;letter-spacing:0.4px;">2003-02-07</div>
<div class="t" style="left:771px;top:273px;font-size:12px;line-height:12px;font-weight:bold;letter-spacing:0.35px;">2003-02-07 10:18:56</div>
<div class="r" style="left:124px;top:291px;width:7px;height:7px;border:1px solid #aca899;background:#fff;"></div>
<div class="r" style="left:126px;top:295px;width:5px;height:1px;background:#000;"></div>
<div class="r" style="left:128px;top:293px;width:1px;height:5px;background:#000;"></div>
<div class="r" style="left:134px;top:295px;width:1px;height:1px;background:#000;"></div>
<div class="r" style="left:136px;top:295px;width:1px;height:1px;background:#000;"></div>
<div class="t" style="left:139px;top:289px;font-size:12px;line-height:12px;font-weight:bold;letter-spacing:-0.05px;">=?iso-2022-jp</div>
<div class="t" style="left:482px;top:289px;font-size:12px;line-height:12px;font-weight:bold;">New</div>
<div class="t" style="left:565px;top:289px;font-size:12px;line-height:12px;font-weight:bold;letter-spacing:-0.1px;">Medium</div>
<div class="t" style="left:665px;top:289px;font-size:12px;line-height:12px;font-weight:bold;letter-spacing:0.4px;">2003-02-07</div>
<div class="t" style="left:771px;top:289px;font-size:12px;line-height:12px;font-weight:bold;letter-spacing:0.35px;">2003-02-07 10:18:52</div>
<div class="r" style="left:124px;top:307px;width:7px;height:7px;border:1px solid #aca899;background:#fff;"></div>
<div class="r" style="left:126px;top:311px;width:5px;height:1px;background:#000;"></div>
<div class="r" style="left:128px;top:309px;width:1px;height:5px;background:#000;"></div>
<div class="r" style="left:134px;top:311px;width:1px;height:1px;background:#000;"></div>
<div class="r" style="left:136px;top:311px;width:1px;height:1px;background:#000;"></div>
<div class="t" style="left:139px;top:305px;font-size:12px;line-height:12px;font-weight:bold;letter-spacing:-0.05px;">Re: Flood atta</div>
<div class="t" style="left:482px;top:305px;font-size:12px;line-height:12px;font-weight:bold;">New</div>
<div class="t" style="left:565px;top:305px;font-size:12px;line-height:12px;font-weight:bold;letter-spacing:-0.1px;">Medium</div>
<div class="t" style="left:665px;top:305px;font-size:12px;line-height:12px;font-weight:bold;letter-spacing:0.4px;">2003-02-07</div>
<div class="t" style="left:771px;top:305px;font-size:12px;line-height:12px;font-weight:bold;letter-spacing:0.35px;">2003-02-07 10:18:46</div>
<div class="r" style="left:124px;top:323px;width:7px;height:7px;border:1px solid #aca899;background:#fff;"></div>
<div class="r" style="left:126px;top:327px;width:5px;height:1px;background:#000;"></div>
<div class="r" style="left:128px;top:325px;width:1px;height:5px;background:#000;"></div>
<div class="r" style="left:134px;top:327px;width:1px;height:1px;background:#000;"></div>
<div class="r" style="left:136px;top:327px;width:1px;height:1px;background:#000;"></div>
<div class="t" style="left:139px;top:321px;font-size:12px;line-height:12px;font-weight:bold;letter-spacing:-0.05px;">A mail containing the null char</div>
<div class="t" style="left:334px;top:321px;font-size:12px;line-height:12px;font-weight:bold;">32736</div>
<div class="t" style="left:482px;top:321px;font-size:12px;line-height:12px;font-weight:bold;">New</div>
<div class="t" style="left:565px;top:321px;font-size:12px;line-height:12px;font-weight:bold;letter-spacing:-0.1px;">Medium</div>
<div class="t" style="left:665px;top:321px;font-size:12px;line-height:12px;font-weight:bold;letter-spacing:0.4px;">2003-02-07</div>
<div class="t" style="left:771px;top:321px;font-size:12px;line-height:12px;font-weight:bold;letter-spacing:0.35px;">2003-02-07 10:18:18</div>
<div class="r" style="left:118px;top:332px;width:1034px;height:1px;background:#fff;"></div>
<div class="r" style="left:118px;top:333px;width:1034px;height:5px;background:#f4f3ee;"></div>
<div class="r" style="left:116px;top:338px;width:1036px;height:1px;background:#aca899;"></div>
<div class="r" style="left:116px;top:339px;width:1036px;height:1px;background:#716f64;"></div>
<div class="r" style="left:216px;top:160px;width:190px;height:161px;background:#fff;border:1px solid #000;"></div>
<div class="r" style="left:216px;top:159px;width:122px;height:1px;background:#000;"></div>
<div class="t" style="left:220px;top:170px;font-size:11px;line-height:11px;letter-spacing:-0.1px;">Edit</div>
<div class="t" style="left:337px;top:170px;font-size:11px;line-height:11px;letter-spacing:-0.1px;">Ctrl + E</div>
<div class="t" style="left:220px;top:184px;font-size:11px;line-height:11px;letter-spacing:-0.1px;">Open in new window</div>
<div class="t" style="left:337px;top:184px;font-size:11px;line-height:11px;letter-spacing:-0.1px;">Ctrl + O</div>
<div class="t" style="left:220px;top:198px;font-size:11px;line-height:11px;letter-spacing:-0.1px;">New Case</div>
<div class="t" style="left:337px;top:198px;font-size:11px;line-height:11px;letter-spacing:-0.1px;">Ctrl + N</div>
<div class="t" style="left:220px;top:212px;font-size:11px;line-height:11px;letter-spacing:-0.1px;">Add event</div>
<div class="t" style="left:220px;top:226px;font-size:11px;line-height:11px;letter-spacing:-0.1px;">Expand</div>
<div class="t" style="left:337px;top:226px;font-size:11px;line-height:11px;letter-spacing:-0.1px;">Ctrl + Right</div>
<div class="t" style="left:220px;top:240px;font-size:11px;line-height:11px;letter-spacing:-0.1px;">Collapse</div>
<div class="t" style="left:337px;top:240px;font-size:11px;line-height:11px;letter-spacing:-0.1px;">Ctrl + Left</div>
<div class="r" style="left:115px;top:340px;width:1037px;height:21px;background:#ece9d8;"></div>
<div class="r" style="left:118px;top:343px;width:1032px;height:15px;background:#efeee6;"></div>
<div class="r" style="left:119px;top:344px;width:1030px;height:13px;background:#f6c616;"></div>
<div class="r" style="left:1149px;top:344px;width:3px;height:13px;background:#aca899;"></div>
<div class="t" style="left:123px;top:346px;font-size:11.5px;line-height:11.5px;font-weight:bold;color:#2e3a62;letter-spacing:0.22px;">Viewing Message: 'Re Flood attacs from your network</div>
<div class="r" style="left:115px;top:361px;width:1037px;height:1px;background:#aca899;"></div>
<div class="r" style="left:116px;top:362px;width:1036px;height:1px;background:#716f64;"></div>
<div class="r" style="left:115px;top:361px;width:1px;height:471px;background:#aca899;"></div>
<div class="r" style="left:116px;top:362px;width:1px;height:470px;background:#716f64;"></div>
<div class="r" style="left:117px;top:363px;width:1035px;height:469px;background:#fff;"></div>
<div class="t" style="left:124px;top:371px;font-size:12px;line-height:12px;font-weight:bold;letter-spacing:-0.05px;">Access classification</div>
<div class="t" style="left:124px;top:392px;font-size:12px;line-height:12px;font-weight:bold;letter-spacing:-0.05px;">Title</div>
<div class="t" style="left:124px;top:411px;font-size:12px;line-height:12px;font-weight:bold;letter-spacing:-0.05px;">Created</div>
<div class="t" style="left:124px;top:432px;font-size:12px;line-height:12px;font-weight:bold;letter-spacing:-0.05px;">From</div>
<div class="t" style="left:124px;top:467px;font-size:12px;line-height:12px;font-weight:bold;letter-spacing:-0.05px;">E-Mail headers</div>
<div class="t" style="left:124px;top:488px;font-size:12px;line-height:12px;font-weight:bold;letter-spacing:-0.05px;">E-Mail data</div>
<div class="t" style="left:124px;top:507px;font-size:12px;line-height:12px;font-weight:bold;letter-spacing:-0.05px;">Email to</div>
<div class="t" style="left:124px;top:556px;font-size:12px;line-height:12px;font-weight:bold;letter-spacing:-0.05px;">Contents</div>
<div class="t" style="left:254px;top:371px;font-size:12px;line-height:12px;letter-spacing:-0.6px;">cth_all</div>
<div class="t" style="left:254px;top:392px;font-size:12px;line-height:12px;letter-spacing:-0.62px;">Re: Flood attacks from your network</div>
<div class="t" style="left:254px;top:411px;font-size:12px;line-height:12px;letter-spacing:-0.65px;">2003-02-07 10:26:29</div>
<div class="t" style="left:254px;top:432px;font-size:12px;line-height:12px;letter-spacing:-0.6px;">Chalmers IRT</div>
<div class="r" style="left:254px;top:445px;width:202px;height:1px;background:#ece9d8;"></div>
<svg class="r" style="left:326px;top:430px;" width="23" height="14" viewBox="0 0 23 14"><path d="M1.2 7.4 Q10 -3.4 18.8 7.4 Q10 18 1.2 7.4 Z" fill="#fff" stroke="#000" stroke-width="1.3"/><circle cx="10.6" cy="7.4" r="3.9" fill="#8a92ea"/><circle cx="10.6" cy="7.2" r="2.4" fill="#000"/><path d="M12 2.6 Q17 2 20.5 5.5" fill="none" stroke="#000" stroke-width="1.6"/><path d="M17 3 L18.5 1 M19 4 L21.5 2.5 M20 5.5 L22.5 5" stroke="#000" stroke-width="1.1"/></svg>
<div class="t" style="left:254px;top:467px;font-size:12px;line-height:12px;letter-spacing:-0.61px;">Received: From theraft.strakt.com ([62.119.131.80]) by caps.strakt.com; Fri, 07</div>
<svg class="r" style="left:629px;top:459px;" width="33" height="25" viewBox="0 0 33 25"><rect x="8.75" y="0.75" width="23.5" height="23.5" fill="#f2ecd8" stroke="#0a50f0" stroke-width="1.5"/>
<rect x="8" y="0" width="25" height="5" fill="#0a50f0"/><rect x="21" y="1.5" width="2.5" height="2" fill="#7aa0f0"/><rect x="24.5" y="1.5" width="2.5" height="2" fill="#7aa0f0"/><rect x="28" y="1.5" width="2.5" height="2" fill="#f04020"/>
<rect x="10.5" y="7" width="20" height="12" fill="#fff" stroke="#a8a8a8" stroke-width="0.8"/><rect x="13" y="9" width="13" height="7.5" fill="#ececec"/>
<path d="M20 21.5 H23 M26 21.5 H29" stroke="#808080" stroke-width="0.8"/>
<path d="M1.5 14.5 Q6 10 13 12.2" fill="none" stroke="#5a5a5a" stroke-width="2.6"/><path d="M12 8.8 L17.5 12.5 L12 15.8 Z" fill="#4a4a4a"/></svg>
<div class="r" style="left:253px;top:506px;width:497px;height:27px;border:1px solid #000;background:#fff;"></div>
<div class="r" style="left:253px;top:555px;width:497px;height:238px;border:1px solid #000;background:#fff;"></div>
<svg class="r" style="left:754px;top:554px;" width="33" height="25" viewBox="0 0 33 25"><rect x="8.75" y="0.75" width="23.5" height="23.5" fill="#f2ecd8" stroke="#0a50f0" stroke-width="1.5"/>
<rect x="8" y="0" width="25" height="5" fill="#0a50f0"/><rect x="21" y="1.5" width="2.5" height="2" fill="#7aa0f0"/><rect x="24.5" y="1.5" width="2.5" height="2" fill="#7aa0f0"/><rect x="28" y="1.5" width="2.5" height="2" fill="#f04020"/>
<rect x="10.5" y="7" width="20" height="12" fill="#fff" stroke="#a8a8a8" stroke-width="0.8"/><rect x="13" y="9" width="13" height="7.5" fill="#ececec"/>
<path d="M20 21.5 H23 M26 21.5 H29" stroke="#808080" stroke-width="0.8"/>
<path d="M1.5 14.5 Q6 10 13 12.2" fill="none" stroke="#5a5a5a" stroke-width="2.6"/><path d="M12 8.8 L17.5 12.5 L12 15.8 Z" fill="#4a4a4a"/></svg>
<div class="t" style="left:258px;top:560px;font-size:11px;line-height:11px;letter-spacing:-0.17px;">Content-Type: text/plain; charset=ISO-8859-1</div>
<div class="t" style="left:258px;top:573px;font-size:11px;line-height:11px;letter-spacing:-0.17px;">Content-Transfer-Encoding: quoted-printable</div>
<div class="t" style="left:258px;top:586px;font-size:11px;line-height:11px;letter-spacing:-0.2px;">129.16.42.196</div>
<div class="t" style="left:339px;top:586px;font-size:11px;line-height:11px;letter-spacing:-0.15px;">mina3-2.mc2.chalmers.se</div>
<div class="t" style="left:258px;top:612px;font-size:11px;line-height:11px;letter-spacing:-0.17px;">Ser ut att ha varit 2003-01-11 kv=E4ll till 2003-01-12 lunch; 30 Mbit/s.</div>
<div class="t" style="left:258px;top:625px;font-size:11px;line-height:11px;letter-spacing:-0.17px;">Bifogar bb1-gw.chalmers.se_fastethernet3_39.ps, trafik-statistik.</div>
<div class="t" style="left:258px;top:651px;font-size:11px;line-height:11px;letter-spacing:-0.17px;">wilfer1[129.16.12.11]% nmap -p 1-65535 129.16.42.196</div>
<div class="t" style="left:258px;top:664px;font-size:11px;line-height:11px;letter-spacing:-0.1px;">21/tcp</div>
<div class="t" style="left:305px;top:664px;font-size:11px;line-height:11px;letter-spacing:-0.1px;">open</div>
<div class="t" style="left:353px;top:664px;font-size:11px;line-height:11px;letter-spacing:-0.2px;">ftp</div>
<div class="t" style="left:426px;top:664px;font-size:11px;line-height:11px;letter-spacing:-0.2px;">=20</div>
<div class="t" style="left:258px;top:677px;font-size:11px;line-height:11px;letter-spacing:-0.1px;">22/tcp</div>
<div class="t" style="left:305px;top:677px;font-size:11px;line-height:11px;letter-spacing:-0.1px;">open</div>
<div class="t" style="left:353px;top:677px;font-size:11px;line-height:11px;letter-spacing:-0.2px;">ssh</div>
<div class="t" style="left:430px;top:677px;font-size:11px;line-height:11px;letter-spacing:-0.2px;">=20</div>
<div class="t" style="left:258px;top:690px;font-size:11px;line-height:11px;letter-spacing:-0.1px;">23/tcp</div>
<div class="t" style="left:305px;top:690px;font-size:11px;line-height:11px;letter-spacing:-0.1px;">open</div>
<div class="t" style="left:353px;top:690px;font-size:11px;line-height:11px;letter-spacing:-0.2px;">telnet</div>
<div class="t" style="left:430px;top:690px;font-size:11px;line-height:11px;letter-spacing:-0.2px;">=20</div>
<div class="t" style="left:258px;top:703px;font-size:11px;line-height:11px;letter-spacing:-0.1px;">79/tcp</div>
<div class="t" style="left:305px;top:703px;font-size:11px;line-height:11px;letter-spacing:-0.1px;">open</div>
<div class="t" style="left:353px;top:703px;font-size:11px;line-height:11px;letter-spacing:-0.2px;">finger</div>
<div class="t" style="left:430px;top:703px;font-size:11px;line-height:11px;letter-spacing:-0.2px;">=20</div>
<div class="t" style="left:258px;top:716px;font-size:11px;line-height:11px;letter-spacing:-0.1px;">80/tcp</div>
<div class="t" style="left:305px;top:716px;font-size:11px;line-height:11px;letter-spacing:-0.1px;">open</div>
<div class="t" style="left:353px;top:716px;font-size:11px;line-height:11px;letter-spacing:-0.2px;">unknown</div>
<div class="t" style="left:445px;top:716px;font-size:11px;line-height:11px;letter-spacing:-0.2px;">=20</div>
<div class="t" style="left:258px;top:729px;font-size:11px;line-height:11px;letter-spacing:-0.1px;">98/tcp</div>
<div class="t" style="left:305px;top:729px;font-size:11px;line-height:11px;letter-spacing:-0.1px;">open</div>
<div class="t" style="left:353px;top:729px;font-size:11px;line-height:11px;letter-spacing:-0.2px;">unknown</div>
<div class="t" style="left:445px;top:729px;font-size:11px;line-height:11px;letter-spacing:-0.2px;">=20</div>
<div class="t" style="left:258px;top:742px;font-size:11px;line-height:11px;letter-spacing:-0.1px;">111/tcp</div>
<div class="t" style="left:308px;top:742px;font-size:11px;line-height:11px;letter-spacing:-0.1px;">open</div>
<div class="t" style="left:356px;top:742px;font-size:11px;line-height:11px;letter-spacing:-0.2px;">sunrpc</div>
<div class="t" style="left:439px;top:742px;font-size:11px;line-height:11px;letter-spacing:-0.2px;">=20</div>
<div class="t" style="left:258px;top:755px;font-size:11px;line-height:11px;letter-spacing:-0.1px;">113/tcp</div>
<div class="t" style="left:308px;top:755px;font-size:11px;line-height:11px;letter-spacing:-0.1px;">open</div>
<div class="t" style="left:356px;top:755px;font-size:11px;line-height:11px;letter-spacing:-0.2px;">ident</div>
<div class="t" style="left:433px;top:755px;font-size:11px;line-height:11px;letter-spacing:-0.2px;">=20</div>
<div class="t" style="left:258px;top:768px;font-size:11px;line-height:11px;letter-spacing:-0.1px;">139/tcp</div>
<div class="t" style="left:308px;top:768px;font-size:11px;line-height:11px;letter-spacing:-0.1px;">open</div>
<div class="t" style="left:356px;top:768px;font-size:11px;line-height:11px;letter-spacing:-0.2px;">netbios-ssn</div>
<div class="t" style="left:445px;top:768px;font-size:11px;line-height:11px;letter-spacing:-0.2px;">=20</div>
<div class="t" style="left:258px;top:781px;font-size:11px;line-height:11px;letter-spacing:-0.1px;">513/tcp</div>
<div class="t" style="left:308px;top:781px;font-size:11px;line-height:11px;letter-spacing:-0.1px;">open</div>
<div class="t" style="left:356px;top:781px;font-size:11px;line-height:11px;letter-spacing:-0.2px;">login</div>
<div class="t" style="left:432px;top:781px;font-size:11px;line-height:11px;letter-spacing:-0.2px;">=20</div>
<div class="r" style="left:124px;top:802px;width:78px;height:21px;background:#ece9d8;border-left:1px solid #fff;border-top:1px solid #fff;border-right:2px solid #000;border-bottom:2px solid #000;"></div>
<div class="t" style="left:155px;top:809px;font-size:11px;line-height:11px;color:#808080;letter-spacing:0.2px;">Edit</div>
<div class="r" style="left:0px;top:832px;width:1152px;height:2px;background:#f4f3ee;"></div>
<div class="r" style="left:0px;top:834px;width:1152px;height:30px;background:#6260c0;"></div>
<div class="r" style="left:0px;top:834px;width:97px;height:30px;border-radius:0 6px 6px 0 / 0 10px 10px 0;background:radial-gradient(ellipse 60px 26px at 30px 18px,#48aa48 0%,#3c9e3c 50%,#338e33 80%,#2a7c2a 100%);box-shadow:inset -3px 0 2px rgba(20,80,20,0.6), inset 0 2px 1px rgba(160,220,160,0.5);"></div>
<svg class="r" style="left:8px;top:838px;" width="24" height="21" viewBox="0 0 24 21"><path d="M5 2.5 Q9 1.6 13.5 2.5 L12.2 9 Q8 8.2 4 9 Z" fill="#e84a20"/><path d="M14.5 5 Q17.5 4.4 21 5 L20 11 Q16.8 10.5 13.5 11 Z" fill="#84dc10"/><path d="M3.5 9.3 Q7.5 8.6 11.3 9.3 L10.5 16.8 Q6.5 16 2.3 16.8 Z" fill="#4a6cf0"/><path d="M12 11.5 Q15.8 10.9 19.5 11.5 L18.8 18.8 Q14.8 18.2 10.8 18.8 Z" fill="#f8c810"/></svg>
<div class="t" style="left:35px;top:842px;font-size:16px;line-height:16px;font-weight:bold;font-style:italic;color:#fff;letter-spacing:0.3px;text-shadow:1px 1px 1px #1a4a1a;">start</div>
<svg class="r" style="left:108px;top:841px;" width="17" height="16" viewBox="0 0 17 16"><path d="M5 9 H14 Q14 4.5 9.5 4.5 Q5 4.5 5 9 Q5 13.5 9.5 13.5 Q12.5 13.5 14 11.5" fill="none" stroke="#10204a" stroke-width="2.6"/><path d="M5 9 H14 Q14 4.5 9.5 4.5 Q5 4.5 5 9 Q5 13.5 9.5 13.5 Q12.5 13.5 14 11.5" fill="none" stroke="#48b8f8" stroke-width="1.6"/><path d="M1 14.5 Q4 6 13 1.5" fill="none" stroke="#60c8ff" stroke-width="1.6"/></svg>
<svg class="r" style="left:132px;top:841px;" width="16" height="16" viewBox="0 0 16 16"><rect x="0" y="0" width="16" height="16" fill="#7a7410"/><circle cx="8" cy="8" r="5" fill="none" stroke="#fff" stroke-width="2"/><path d="M8 5 V8.5 H11" stroke="#fff" stroke-width="1.6" fill="none"/><path d="M1 3 V1 H3 M13 1 H15 V3 M1 13 V15 H3 M13 15 H15 V13" stroke="#fff" stroke-width="1"/></svg>
<svg class="r" style="left:154px;top:840px;" width="18" height="18" viewBox="0 0 18 18"><path d="M2 4 L12 2 L14 13 L4 16 Z" fill="#f0f4ff" stroke="#3a6ae0" stroke-width="1.4" stroke-linejoin="round"/><path d="M5 12 L11 5" stroke="#2a4ab0" stroke-width="2"/><path d="M5 12 L4 14 L6.5 13" fill="#202020"/><circle cx="14" cy="5" r="1.5" fill="#f04a20"/></svg>
<div class="t" style="left:183px;top:838px;font-size:12px;line-height:12px;color:#8cb4ff;">&raquo;</div>
<div class="r" style="left:199px;top:838px;width:1px;height:20px;background:#4a90f8;"></div>
<div class="r" style="left:199px;top:838px;width:5px;height:1px;background:#4a90f8;"></div>
<div class="r" style="left:199px;top:857px;width:9px;height:1px;background:#4a90f8;"></div>
<svg class="r" style="left:208px;top:841px;" width="16" height="16" viewBox="0 0 16 16"><rect x="0" y="0" width="16" height="16" fill="#7a7410"/><circle cx="8" cy="8" r="5" fill="none" stroke="#fff" stroke-width="2"/><path d="M8 5 V8.5 H11" stroke="#fff" stroke-width="1.6" fill="none"/><path d="M1 3 V1 H3 M13 1 H15 V3 M1 13 V15 H3 M13 15 H15 V13" stroke="#fff" stroke-width="1"/></svg>
<div class="t" style="left:227px;top:844px;font-size:11px;line-height:11px;color:#fff;letter-spacing:0.15px;">Inbox - Microsoft Out...</div>
<div class="r" style="left:359px;top:838px;width:1px;height:20px;background:#4a90f8;"></div>
<div class="r" style="left:359px;top:838px;width:5px;height:1px;background:#4a90f8;"></div>
<div class="r" style="left:359px;top:857px;width:9px;height:1px;background:#4a90f8;"></div>
<svg class="r" style="left:368px;top:843px;" width="15" height="12" viewBox="0 0 15 12"><rect x="0.5" y="0.5" width="14" height="11" fill="#f8f0b0" stroke="#202020"/><path d="M0.5 0.5 L7.5 6.5 L14.5 0.5" fill="none" stroke="#202020"/></svg>
<div class="t" style="left:388px;top:844px;font-size:11px;line-height:11px;color:#fff;letter-spacing:0.1px;">Re: Mail development...</div>
<div class="r" style="left:519px;top:838px;width:1px;height:20px;background:#4a90f8;"></div>
<div class="r" style="left:519px;top:838px;width:5px;height:1px;background:#4a90f8;"></div>
<div class="r" style="left:519px;top:857px;width:9px;height:1px;background:#4a90f8;"></div>
<svg class="r" style="left:527px;top:843px;" width="16" height="13" viewBox="0 0 16 13"><rect x="0.5" y="0.5" width="15" height="12" fill="#fff" stroke="#2060d0"/><rect x="0.5" y="0.5" width="15" height="2" fill="#2060d0"/></svg>
<div class="t" style="left:548px;top:844px;font-size:11px;line-height:11px;color:#fff;letter-spacing:0.05px;">StraktProject</div>
<div class="r" style="left:678px;top:836px;width:52px;height:1px;background:#2040b0;"></div>
<div class="r" style="left:678px;top:836px;width:1px;height:22px;background:#2040b0;"></div>
<svg class="r" style="left:688px;top:843px;" width="16" height="13" viewBox="0 0 16 13"><rect x="0.5" y="0.5" width="15" height="12" fill="#fff" stroke="#2060d0"/><rect x="0.5" y="0.5" width="15" height="2" fill="#2060d0"/></svg>
<div class="t" style="left:708px;top:844px;font-size:11px;line-height:11px;color:#fff;letter-spacing:-0.4px;">CAPScase</div>
<div class="r" style="left:840px;top:838px;width:1px;height:20px;background:#4a90f8;"></div>
<div class="r" style="left:840px;top:838px;width:5px;height:1px;background:#4a90f8;"></div>
<div class="r" style="left:840px;top:857px;width:9px;height:1px;background:#4a90f8;"></div>
<svg class="r" style="left:849px;top:841px;" width="12" height="16" viewBox="0 0 12 16"><path d="M2 5 H10 L9 15 H3 Z" fill="#d0c8a0" stroke="#606040" stroke-width="0.6"/><path d="M3 5 L2 0 M6 5 L6 1 M9 5 L10 0" stroke="#e03020" stroke-width="1.5"/><path d="M4 5 L4 1" stroke="#30a040" stroke-width="1.2"/><path d="M8 5 L8 1" stroke="#3060e0" stroke-width="1.2"/></svg>
<div class="t" style="left:868px;top:844px;font-size:11px;line-height:11px;color:#fff;letter-spacing:-0.2px;">Action - Paint</div>
<div class="t" style="left:1024px;top:845px;font-size:11px;line-height:11px;color:#fff;letter-spacing:0.3px;">SV</div>
<svg class="r" style="left:1045px;top:842px;" width="15" height="16" viewBox="0 0 15 16"><path d="M0.8 0.8 H12.2 V11.6 H11 L9.8 14.2 L8.2 11.6 H0.8 Z" fill="#fbf8b8" stroke="#000" stroke-width="1.4" stroke-linejoin="round"/><text x="6.6" y="10.2" font-family="Liberation Sans" font-weight="bold" font-size="10.5" fill="#0a2a90" text-anchor="middle">?</text></svg>
<svg class="r" style="left:1069px;top:839px;" width="11" height="18" viewBox="0 0 11 18"><path d="M3.5 1.5 H9.5 V5.5 H7" fill="none" stroke="#fff" stroke-width="1.3"/><rect x="1" y="4" width="6" height="3.5" fill="#6260c0" stroke="#fff" stroke-width="1.5"/><path d="M2 13.5 H8 L5 16.5 Z" fill="#fff"/></svg>
<div class="r" style="left:1096px;top:834px;width:56px;height:30px;background:linear-gradient(to bottom,#18a0ee 0%,#0e90e4 50%,#1898e8 100%);"></div>
<div class="r" style="left:1086px;top:840px;width:17px;height:17px;border-radius:50%;border:1px solid #8090b0;background:radial-gradient(circle at 40% 35%,#70c0ff 0%,#2a80e0 60%,#1a5ab8 100%);"></div>
<svg class="r" style="left:1090px;top:843px;" width="10" height="12" viewBox="0 0 10 12"><path d="M6.5 1.5 L2.5 6 L6.5 10.5" fill="none" stroke="#fff" stroke-width="2.2"/></svg>
<div class="t" style="left:1111px;top:844px;font-size:11px;line-height:11px;color:#fff;letter-spacing:0.2px;">11:25</div>
</body></html>
